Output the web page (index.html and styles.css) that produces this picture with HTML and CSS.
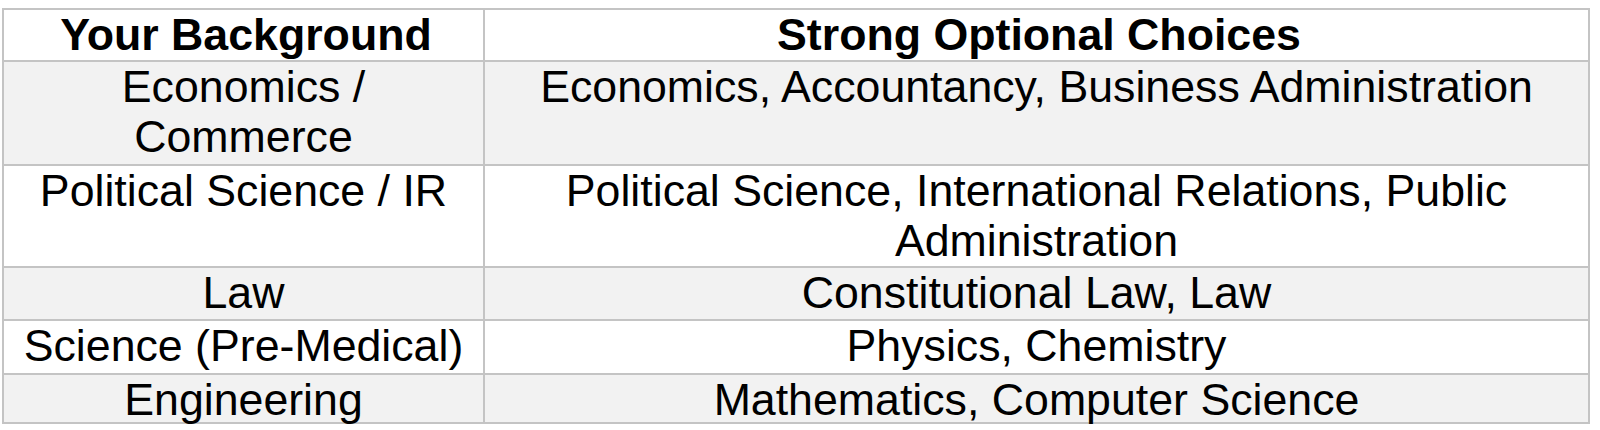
FILE: index.html
```html
<!DOCTYPE html>
<html lang="en">
<head>
<meta charset="utf-8">
<title>Optional Choices</title>
<link rel="stylesheet" href="styles.css">
</head>
<body>
<div class="table">
  <div class="cell head">Your Background</div>
  <div class="cell head">Strong Optional Choices</div>

  <div class="cell shade">Economics /<br>Commerce</div>
  <div class="cell shade">Economics, Accountancy, Business Administration</div>

  <div class="cell">Political Science / IR</div>
  <div class="cell">Political Science, International Relations, Public<br>Administration</div>

  <div class="cell shade">Law</div>
  <div class="cell shade">Constitutional Law, Law</div>

  <div class="cell">Science (Pre-Medical)</div>
  <div class="cell">Physics, Chemistry</div>

  <div class="cell shade">Engineering</div>
  <div class="cell shade">Mathematics, Computer Science</div>
</div>
</body>
</html>
```

FILE: styles.css
```css
html, body {
  margin: 0;
  padding: 0;
  background: #ffffff;
}

body {
  padding: 8px 0 0 2px;
  font-family: "Liberation Sans", Arial, sans-serif;
  color: #000000;
}

.table {
  display: grid;
  width: 1588px;
  box-sizing: border-box;
  grid-template-columns: 479px 1103px;
  grid-template-rows: 50px 102px 100px 51px 52px 47px;
  gap: 2px;
  padding: 2px;
  background: #c4c4c4;
}

.cell {
  background: #ffffff;
  font-size: 44.7px;
  line-height: 50px;
  text-align: center;
  white-space: nowrap;
}

.head {
  font-weight: bold;
  padding-left: 5px;
}

.shade {
  background: #f2f2f2;
}
```
